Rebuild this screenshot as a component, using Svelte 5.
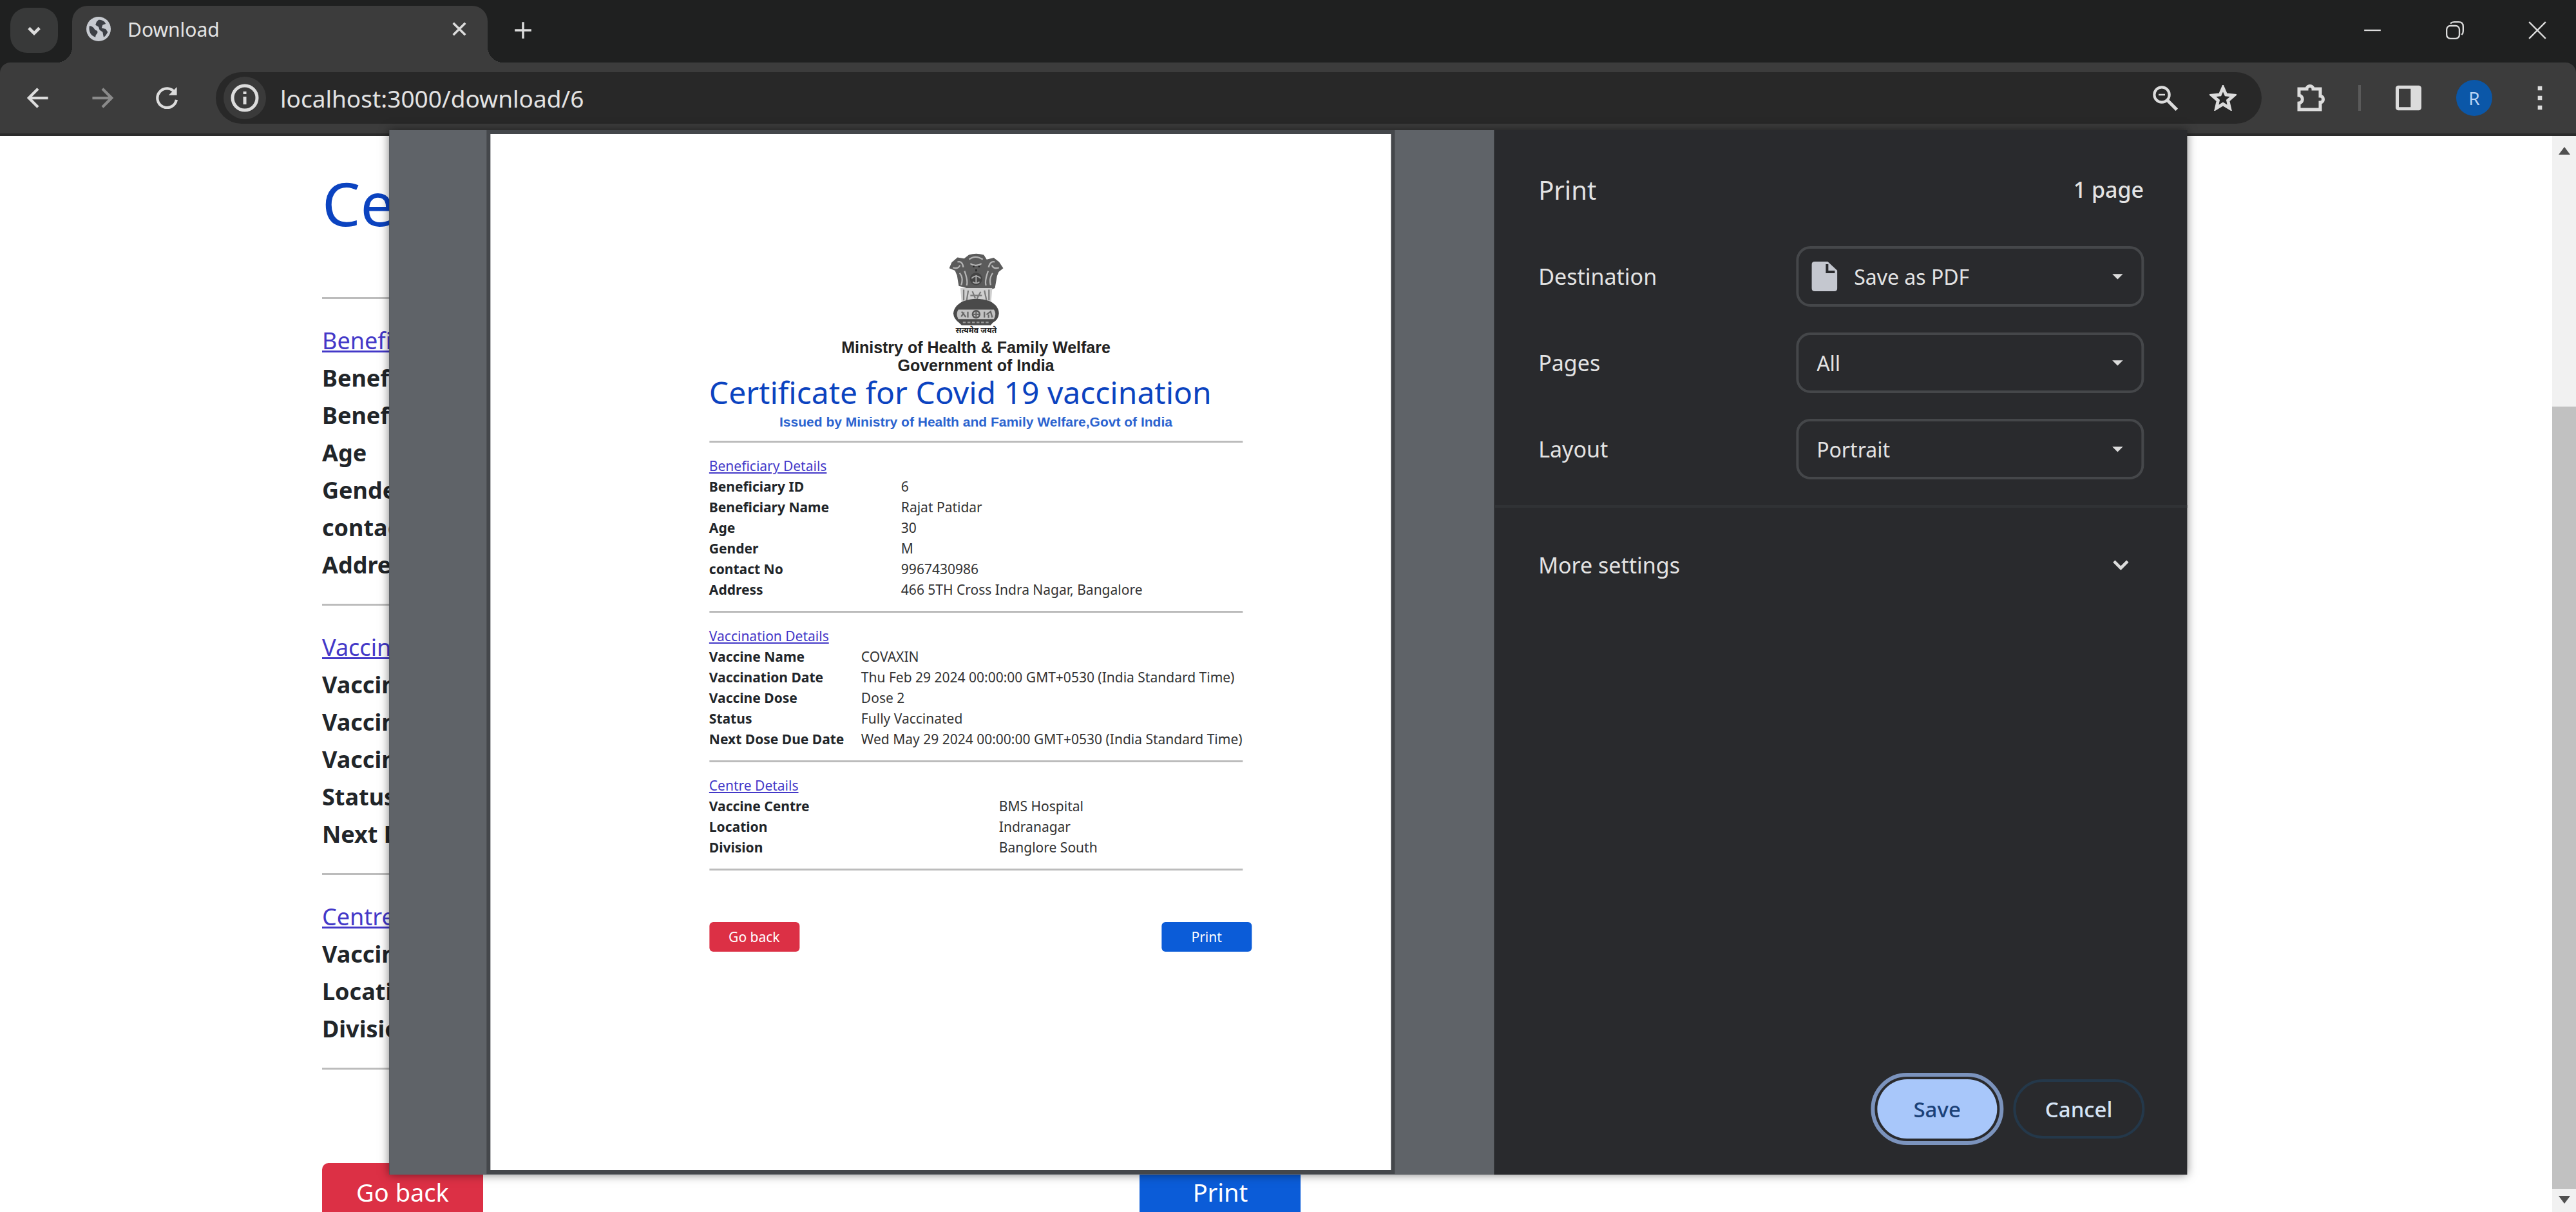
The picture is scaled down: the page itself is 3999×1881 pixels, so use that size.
<script lang="ts">
  type Section = { id: string; title: string; rows: [string, string][] };

  const sections: Section[] = [
    {
      id: 'beneficiary',
      title: 'Beneficiary Details',
      rows: [
        ['Beneficiary ID', '6'],
        ['Beneficiary Name', 'Rajat Patidar'],
        ['Age', '30'],
        ['Gender', 'M'],
        ['contact No', '9967430986'],
        ['Address', '466 5TH Cross Indra Nagar, Bangalore']
      ]
    },
    {
      id: 'vaccination',
      title: 'Vaccination Details',
      rows: [
        ['Vaccine Name', 'COVAXIN'],
        ['Vaccination Date', 'Thu Feb 29 2024 00:00:00 GMT+0530 (India Standard Time)'],
        ['Vaccine Dose', 'Dose 2'],
        ['Status', 'Fully Vaccinated'],
        ['Next Dose Due Date', 'Wed May 29 2024 00:00:00 GMT+0530 (India Standard Time)']
      ]
    },
    {
      id: 'centre',
      title: 'Centre Details',
      rows: [
        ['Vaccine Centre', 'BMS Hospital'],
        ['Location', 'Indranagar'],
        ['Division', 'Banglore South']
      ]
    }
  ];
</script>

{#snippet details(withValues: boolean)}
  {#each sections as section}
    <section class="block {section.id}">
      <h2><a href="#{section.id}">{section.title}</a></h2>
      <table>
        <tbody>
          {#each section.rows as [label, value]}
            <tr>
              <th scope="row">{label}</th>
              {#if withValues}<td>{value}</td>{/if}
            </tr>
          {/each}
        </tbody>
      </table>
    </section>
  {/each}
  <div class="actions">
    <button class="btn danger">Go back</button>
    <button class="btn primary">Print</button>
  </div>
{/snippet}

{#snippet caret()}
  <svg class="caret" viewBox="0 0 24 24" aria-hidden="true"><path d="M1 7h22L12 18z" /></svg>
{/snippet}

<div class="browser">
  <header class="tabs">
    <button class="tab-search" aria-label="Search tabs">
      <svg class="icon small" viewBox="0 0 24 24"><path d="M5 9l7 7 7-7" stroke-width="4" /></svg>
    </button>
    <div class="tab">
      <svg class="globe" viewBox="0 0 24 24" aria-hidden="true">
        <circle cx="12" cy="12" r="12" fill="#c7cad0" />
        <path d="M3 9c2 0 4 1 5 3s3 1 3 3-2 2-2 5c-4-1-7-5-6-11zM12 3c3 0 6 1 7 4l-3 1-1 3 4 1 2 3c-1 2-2 4-4 5l-1-5-3-2-1-3-3-2 1-3z" fill="#3c3f45" />
      </svg>
      <span class="tab-title">Download</span>
      <button class="plain" aria-label="Close tab">
        <svg class="icon small" viewBox="0 0 24 24"><path d="M4 4l16 16M20 4L4 20" stroke-width="3" /></svg>
      </button>
    </div>
    <button class="plain" aria-label="New tab">
      <svg class="icon small" viewBox="0 0 24 24"><path d="M12 1v22M1 12h22" stroke-width="3" /></svg>
    </button>
    <div class="window-controls">
      <button class="plain" aria-label="Minimize">
        <svg class="icon small" viewBox="0 0 24 24"><path d="M1 12h22" stroke-width="2" /></svg>
      </button>
      <button class="plain" aria-label="Restore">
        <svg class="icon small" viewBox="0 0 24 24"><rect x="1" y="6" width="17" height="17" rx="5" /><path d="M6 3q2-2 5-2h6q6 0 6 6v6q0 3-2 5" /></svg>
      </button>
      <button class="plain" aria-label="Close window">
        <svg class="icon small" viewBox="0 0 24 24"><path d="M1 1l22 22M23 1L1 23" stroke-width="2" /></svg>
      </button>
    </div>
  </header>

  <nav class="toolbar" aria-label="Browser toolbar">
    <div class="nav">
      <button class="plain" aria-label="Back">
        <svg class="icon nav-icon" viewBox="0 0 24 24"><path d="M23 12H2M12 2L2 12l10 10" stroke-width="3" /></svg>
      </button>
      <button class="plain dim" aria-label="Forward">
        <svg class="icon nav-icon" viewBox="0 0 24 24"><path d="M1 12h21M12 2l10 10-10 10" stroke-width="3" /></svg>
      </button>
      <button class="plain" aria-label="Reload">
        <svg class="icon nav-icon" viewBox="0 0 24 24"><path d="M21 6.500A10.500 10.500 0 1 0 22.500 14" stroke-width="3" /><path d="M23 0v9h-9z" fill="currentColor" stroke="none" /></svg>
      </button>
    </div>
    <div class="omnibox">
      <button class="plain info" aria-label="View site information">
        <svg class="icon" viewBox="0 0 24 24"><circle cx="12" cy="12" r="9.500" stroke-width="2.500" /><path d="M12 11v6M12 7v2" stroke-width="2.500" /></svg>
      </button>
      <input class="url" aria-label="Address" value="localhost:3000/download/6" />
      <button class="plain" aria-label="Zoom">
        <svg class="icon mid" viewBox="0 0 24 24"><circle cx="9" cy="9" r="7" stroke-width="2.500" /><path d="M14 14l9 9" stroke-width="3" /><path d="M6 9h6" stroke-width="1.500" /></svg>
      </button>
      <button class="plain" aria-label="Bookmark this page">
        <svg class="icon mid" viewBox="0 0 24 24"><path d="M12 2.500l2.800 6.500 7.200.7-5.400 4.700 1.600 7.100-6.200-3.800-6.200 3.800 1.600-7.100L2 9.700 9.200 9z" stroke-width="3" /></svg>
      </button>
    </div>
    <div class="tools">
      <button class="plain" aria-label="Extensions">
        <svg class="icon" viewBox="0 0 24 24"><path d="M3 5h6c0-3 5-3 5 0h5.500v5.500c3 0 3 5 0 5V21H3v-5c3.500-.5 3.500-5.500 0-6z" stroke-width="2.500" /></svg>
      </button>
      <span class="divider"></span>
      <button class="plain" aria-label="Side panel">
        <svg class="icon mid" viewBox="0 0 24 24"><rect x="1.500" y="2" width="21" height="20" rx="1" stroke-width="3" /><path d="M14 3h8v18h-8z" fill="currentColor" stroke="none" /></svg>
      </button>
      <button class="avatar" aria-label="Profile">R</button>
      <button class="plain" aria-label="Menu">
        <svg class="icon mid" viewBox="0 0 24 24"><path d="M10 1h4v4h-4zM10 10h4v4h-4zM10 19h4v4h-4z" fill="currentColor" stroke="none" /></svg>
      </button>
    </div>
  </nav>

  <div class="viewport">
    <main class="page">
      <h1>Certificate</h1>
      {@render details(false)}
    </main>
    <div class="scrollbar" aria-hidden="true">
      <svg viewBox="0 0 24 24"><path d="M12 5l9 12H3z" /></svg>
      <span class="thumb"></span>
      <svg viewBox="0 0 24 24"><path d="M12 19l9-12H3z" /></svg>
    </div>
  </div>

  <div class="dialog" role="dialog" aria-label="Print">
    <div class="preview">
      <article class="sheet">
        <svg class="emblem" viewBox="100 55 280 390" aria-hidden="true">
          <path d="M205 62q35-12 72 0l14 22 34-8 26 20 20 30-22 18-8 20-10 58-28 12-22 16-20-16H222l-20-10-46-12-8-50-10-24-28-12 12-28 28-24 32 6z" fill="#5b5b5b" />
          <path d="M206 84q30-24 66 0M212 104q26 18 54 0M150 96q24-6 28 26M330 96q-22-6-30 26M128 124q26 8 34-12M350 124q-24 8-34-12M160 150q20 22 8 58M320 150q-18 24-10 58M184 140q18 50 10 70M298 140q-18 50-10 70" fill="none" stroke="#b5b5b5" stroke-width="7" />
          <circle cx="240" cy="178" r="30" fill="#444" />
          <path d="M218 176q22-24 44 0M224 192q16 14 32 0M240 160v40" fill="none" stroke="#aaa" stroke-width="6" />
          <path d="M224 118h8M250 118h8M240 132v10" stroke="#222" stroke-width="7" />
          <path d="M164 222h154l-6 72H170z" fill="#cfcfcf" />
          <path d="M180 230v52M202 234l-8 50M222 238l14 34M262 240l-18 34M280 234l10 46M302 230v52M212 258h56" fill="none" stroke="#7b7b7b" stroke-width="7" />
          <path d="M178 286q62-24 128 0 44 22 44 60-2 30-30 44l-10 12H170l-12-12q-26-18-28-44 2-38 48-60z" fill="#4a4a4a" />
          <path d="M154 326h172q14 20 0 46H154q-14-24 0-46z" fill="#c2c2c2" />
          <circle cx="240" cy="349" r="17" fill="none" stroke="#555" stroke-width="8" />
          <path d="M240 334v30M225 349h30M170 336l20 26M168 360l14-20M200 336v28M280 336v28M290 350l20-14 8 28M300 350v16" fill="none" stroke="#666" stroke-width="7" />
          <path d="M176 388h128" stroke="#999" stroke-width="7" stroke-dasharray="14 8" />
          <text x="240" y="441" text-anchor="middle" font-size="38" font-weight="700" fill="#222">सत्यमेव जयते</text>
        </svg>
        <p class="ministry">Ministry of Health &amp; Family Welfare<br />Government of India</p>
        <h1>Certificate for Covid 19 vaccination</h1>
        <p class="issued">Issued by Ministry of Health and Family Welfare,Govt of India</p>
        {@render details(true)}
      </article>
    </div>
    <form class="settings">
      <div class="head"><h2>Print</h2><span>1 page</span></div>
      <div class="field">
        <label for="destination">Destination</label>
        <div class="select with-icon">
          <svg class="file" viewBox="0 0 40 46" aria-hidden="true"><path d="M5 0h20l15 14v27q0 5-5 5H5q-5 0-5-5V5q0-5 5-5z" fill="#c4c7cf" /><path d="M24 4v12h12" fill="none" stroke="#292a2d" stroke-width="4" /></svg>
          <select id="destination"><option>Save as PDF</option></select>
          {@render caret()}
        </div>
      </div>
      <div class="field">
        <label for="pages">Pages</label>
        <div class="select">
          <select id="pages"><option>All</option></select>
          {@render caret()}
        </div>
      </div>
      <div class="field">
        <label for="layout">Layout</label>
        <div class="select">
          <select id="layout"><option>Portrait</option></select>
          {@render caret()}
        </div>
      </div>
      <button type="button" class="more">
        More settings
        <svg class="icon small" viewBox="0 0 24 24"><path d="M3 7l9 9 9-9" stroke-width="4" /></svg>
      </button>
      <div class="footer">
        <button type="button" class="pill save">Save</button>
        <button type="button" class="pill cancel">Cancel</button>
      </div>
    </form>
  </div>
</div>

<style>
  :global(body) {
    overflow: hidden;
  }
  .browser,
  .browser * {
    box-sizing: border-box;
  }
  .browser {
    position: relative;
    display: flex;
    flex-direction: column;
    height: 100vh;
    background: #1f2020;
    font-family: 'Noto Sans', 'Open Sans', sans-serif;
    color: #e3e3e3;
  }
  h1,
  h2,
  p {
    margin: 0;
    font-weight: 400;
  }
  button,
  input,
  select {
    font-family: inherit;
    color: inherit;
    border: 0;
    padding: 0;
    background: none;
  }
  .plain {
    display: grid;
    place-items: center;
    width: 48px;
    height: 48px;
    flex: none;
  }
  .icon {
    display: block;
    width: 48px;
    height: 48px;
    fill: none;
    stroke: currentColor;
    stroke-width: 2;
    color: #dcdcdc;
  }
  .icon.mid {
    width: 42px;
    height: 40px;
  }
  .icon.nav-icon {
    width: 34px;
    height: 34px;
  }
  .icon.small {
    width: 28px;
    height: 28px;
  }
  .dim .icon {
    color: #8a8a8a;
  }

  .tabs {
    display: flex;
    align-items: center;
    height: 97px;
    padding: 0 36px 3px 16px;
    flex: none;
  }
  .tab-search {
    display: grid;
    place-items: center;
    width: 74px;
    height: 70px;
    border-radius: 26px;
    background: #383939;
  }
  .tab {
    position: relative;
    display: flex;
    align-items: center;
    align-self: flex-end;
    width: 645px;
    height: 88px;
    margin: 0 31px -3px 22px;
    padding: 0 20px 16px 20px;
    border-radius: 24px 24px 0 0;
    background: #3c3c3c;
  }
  .tab::before,
  .tab::after {
    content: '';
    position: absolute;
    bottom: 0;
    width: 24px;
    height: 24px;
  }
  .tab::before {
    right: 100%;
    background: radial-gradient(circle at 0 0, transparent 24px, #3c3c3c 24px);
  }
  .tab::after {
    left: 100%;
    background: radial-gradient(circle at 100% 0, transparent 24px, #3c3c3c 24px);
  }
  .globe {
    width: 42px;
    height: 38px;
    margin-right: 24px;
  }
  .tab-title {
    flex: 1;
    font-size: 30px;
  }
  .window-controls {
    display: flex;
    gap: 80px;
    margin-left: auto;
  }

  .toolbar {
    display: flex;
    align-items: center;
    gap: 52px;
    height: 114px;
    padding: 0 32px 0 35px;
    flex: none;
    border-bottom: 4px solid #2b2b2b;
    border-radius: 16px 16px 0 0;
    background: #3c3c3c;
  }
  .nav {
    display: flex;
    gap: 52px;
  }
  .tools {
    display: flex;
    align-items: center;
    gap: 50px;
  }
  .omnibox {
    display: flex;
    align-items: center;
    gap: 42px;
    flex: 1;
    height: 80px;
    padding: 0 36px 0 12px;
    border-radius: 40px;
    background: #282828;
  }
  .info {
    width: 66px;
    height: 66px;
    margin-right: -20px;
    border-radius: 33px;
    background: #3a3a3a;
  }
  .url {
    flex: 1;
    min-width: 0;
    font-size: 37px;
    outline: 0;
  }
  .divider {
    width: 4px;
    height: 40px;
    background: #5a5a5a;
  }
  .avatar {
    width: 56px;
    height: 56px;
    border-radius: 28px;
    background: #0b57a8;
    color: #b9d4f5;
    font-size: 28px;
  }

  .viewport {
    display: flex;
    flex: 1;
    min-height: 0;
    overflow: hidden;
    background: #fff;
    color: #212529;
  }
  .scrollbar {
    display: flex;
    flex-direction: column;
    align-items: center;
    width: 37px;
    padding: 8px 0 4px;
    margin-left: auto;
    flex: none;
    background: #f1f1f1;
  }
  .scrollbar svg {
    width: 24px;
    height: 24px;
    margin: 4px 0;
    fill: #505050;
    flex: none;
  }
  .thumb {
    width: 100%;
    flex: 1;
    margin-top: 380px;
    background: #c1c1c1;
  }

  .page {
    width: 50.500%;
    padding: 50px 0 0 500px;
    flex: none;
    white-space: nowrap;
  }
  h1 {
    color: #0b43c0;
  }
  .page h1 {
    height: 203px;
    border-bottom: 3px solid #bcbcbc;
    font-size: 94px;
    line-height: 108px;
  }
  .block {
    padding: 36px 0 31px;
    border-bottom: 3px solid #bcbcbc;
  }
  .block h2 {
    font-size: 36px;
    line-height: 58px;
  }
  .block a {
    color: #4338c8;
    text-decoration: underline;
  }
  table {
    width: 100%;
    border-collapse: collapse;
    table-layout: fixed;
    font-size: 36px;
    line-height: 58px;
  }
  th,
  td {
    padding: 0;
    text-align: left;
    vertical-align: top;
  }
  th {
    color: #212529;
    font-weight: 700;
  }
  .actions {
    display: flex;
    justify-content: space-between;
    padding-top: 145px;
  }
  .btn {
    width: 250px;
    height: 90px;
    border-radius: 10px;
    color: #fff;
    font-size: 38px;
  }
  .danger {
    background: #dc3045;
  }
  .primary {
    background: #0b5cd8;
  }

  .dialog {
    position: absolute;
    top: 202px;
    left: 50%;
    display: flex;
    width: 69.800%;
    bottom: 58px;
    transform: translateX(-50%);
    background: #292a2d;
    box-shadow: 0 0 14px rgba(0, 0, 0, 0.500);
  }
  .preview {
    flex: 1;
    min-width: 0;
    padding: 6px 160px 7px 157px;
    background: #5f6368;
  }
  .sheet {
    height: 100%;
    padding: 179px 230px 0 340px;
    background: #fff;
    box-shadow: 0 0 0 6px #44474b;
    color: #333;
    white-space: nowrap;
  }
  .emblem {
    display: block;
    width: 90px;
    height: 138px;
    margin: 0 auto;
  }
  .ministry {
    color: #222;
    font-family: 'Liberation Sans', Arial, sans-serif;
    font-size: 25px;
    font-weight: 700;
    line-height: 28px;
    text-align: center;
  }
  .sheet h1 {
    font-size: 48px;
    line-height: 56px;
  }
  .issued {
    height: 50px;
    border-bottom: 3px solid #bcbcbc;
    color: #2b63cf;
    font-family: 'Liberation Sans', Arial, sans-serif;
    font-size: 21px;
    font-weight: 700;
    line-height: 36px;
    text-align: center;
  }
  .sheet .block {
    padding: 20px 0 17px;
  }
  .sheet h2,
  .sheet table {
    font-size: 21px;
    line-height: 32px;
  }
  .sheet .beneficiary th {
    width: 298px;
  }
  .sheet .vaccination th {
    width: 236px;
  }
  .sheet .centre th {
    width: 450px;
  }
  .sheet .actions {
    padding-top: 80px;
    margin-right: -14px;
  }
  .sheet .btn {
    width: 140px;
    height: 46px;
    border-radius: 6px;
    font-size: 21px;
  }

  .settings {
    display: flex;
    flex-direction: column;
    flex: none;
    width: 1076px;
    padding-top: 62px;
    font-size: 34px;
  }
  .head,
  .field {
    display: flex;
    align-items: center;
    justify-content: space-between;
    padding: 0 67px 0 69px;
  }
  .head {
    height: 60px;
    margin-bottom: 58px;
    font-weight: 500;
  }
  .head h2 {
    font-size: 40px;
  }
  .field {
    margin-bottom: 40px;
  }
  .select {
    display: flex;
    align-items: center;
    width: 540px;
    height: 94px;
    padding: 0 28px;
    border: 4px solid #45474a;
    border-radius: 22px;
  }
  .with-icon {
    padding-left: 20px;
  }
  .file {
    width: 40px;
    height: 46px;
    margin-right: 26px;
  }
  select {
    flex: 1;
    appearance: none;
    font-size: 32px;
    outline: 0;
  }
  .caret {
    width: 18px;
    height: 18px;
    fill: #dcdcdc;
  }
  .more {
    display: flex;
    align-items: center;
    justify-content: space-between;
    padding: 66px 89px 64px 69px;
    border-top: 4px solid #303235;
    font-size: 34px;
  }
  .footer {
    display: flex;
    gap: 25px;
    justify-content: flex-end;
    margin-top: auto;
    padding: 0 66px 56px;
  }
  .pill {
    height: 92px;
    border-radius: 46px;
    font-size: 33px;
    font-weight: 500;
  }
  .save {
    width: 186px;
    background: #a8c7fa;
    color: #1c4278;
    outline: 6px solid #7b93bd;
    outline-offset: 4px;
  }
  .cancel {
    width: 204px;
    border: 4px solid #24384a;
    color: #d6e4f5;
  }
</style>
